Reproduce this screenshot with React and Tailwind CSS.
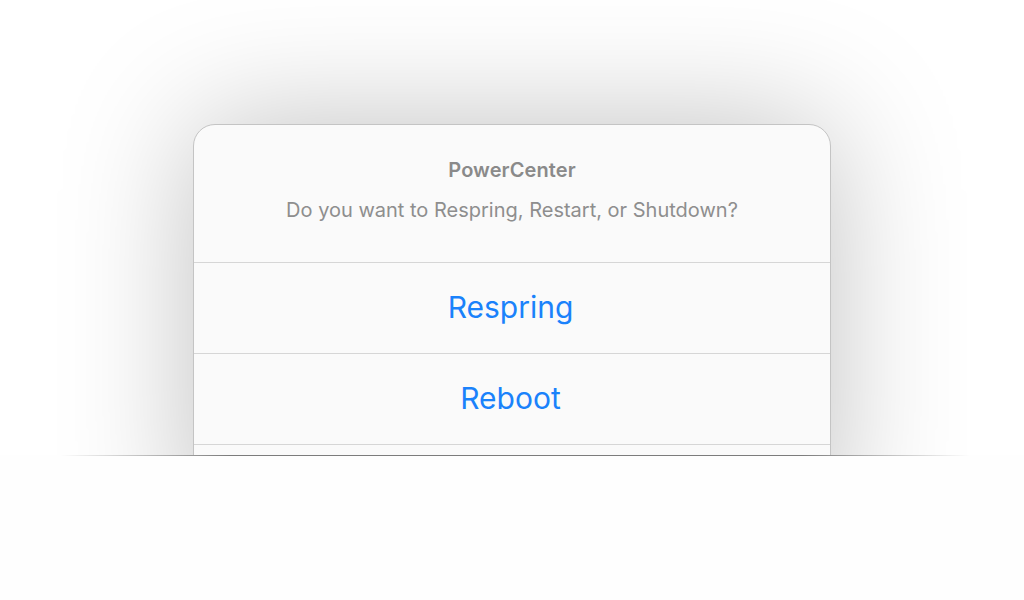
export default function App() {
  const font = { fontFamily: 'Inter, "Noto Sans", Roboto, sans-serif' };
  return (
    <div className="w-[1024px] h-[600px] bg-[#fefefe] flex flex-col" style={font}>
      <div className="h-[455px] shrink-0 bg-white overflow-hidden flex justify-center items-start pt-[124px]">
        <div className="w-[638px] shrink-0 bg-[#fafafa] border border-[#c4c4c4] rounded-[22px] shadow-[0_0_130px_rgba(0,0,0,0.25)] flex flex-col">
          <div className="h-[138px] shrink-0 flex flex-col items-center pt-[32px] border-b border-[#d6d6d6]">
            <div className="text-[20px] font-semibold text-[#8a8a8a] leading-[26px] tracking-[0.1px]">PowerCenter</div>
            <div className="mt-[14px] text-[20px] text-[#8e8e8e] leading-[26px]">Do you want to Respring, Restart, or Shutdown?</div>
          </div>
          <div className="h-[91px] shrink-0 flex items-center justify-center border-b border-[#d6d6d6] text-[30px] text-[#1a82fb] pb-[2px] pr-[3px]">Respring</div>
          <div className="h-[91px] shrink-0 flex items-center justify-center border-b border-[#d6d6d6] text-[30px] text-[#1a82fb] pb-[2px] pr-[3px]">Reboot</div>
          <div className="h-[91px] shrink-0"></div>
        </div>
      </div>
      <div className="h-px shrink-0 bg-[linear-gradient(to_right,transparent_60px,#7c7c7c_230px,#7c7c7c_800px,transparent_970px)]"></div>
    </div>
  );
}
